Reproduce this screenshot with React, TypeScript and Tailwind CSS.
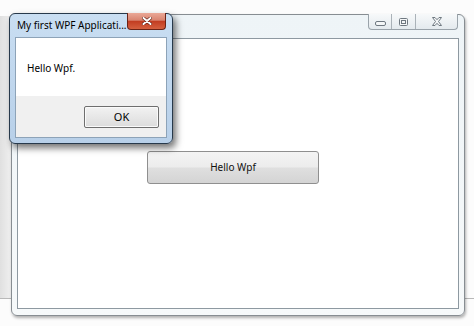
import React from "react"

const CaptionButtons = () => {
  return (
    <div className="-mt-px mr-px flex h-[16px] overflow-hidden rounded-b-[4px] border border-t-0 border-[#9aa3aa] bg-gradient-to-b from-[#f7f9fa] to-[#e4eaee]">
      <div className="flex w-[23px] items-center justify-center border-r border-[#aab2b8] pt-[3px]">
        <svg width="11" height="5" viewBox="0 0 11 5">
          <rect x="0.5" y="0.5" width="10" height="4" rx="1.5" fill="#f4f6f7" stroke="#6f7880" />
        </svg>
      </div>
      <div className="flex w-[24px] items-center justify-center border-r border-[#aab2b8]">
        <svg width="9" height="8" viewBox="0 0 9 8">
          <rect x="0.5" y="0.5" width="8" height="7" rx="1" fill="#f4f6f7" stroke="#6f7880" />
          <rect x="2.5" y="2.5" width="4" height="3" fill="none" stroke="#6f7880" />
        </svg>
      </div>
      <div className="flex w-[41px] items-center justify-center">
        <svg width="10" height="9" viewBox="0 0 10 9">
          <path
            d="M0.5 0.5 H3 L5 2.7 L7 0.5 H9.5 L6.5 4.5 L9.5 8.5 H7 L5 6.3 L3 8.5 H0.5 L3.5 4.5 Z"
            fill="#f4f6f7"
            stroke="#6f7880"
            strokeLinejoin="round"
          />
        </svg>
      </div>
    </div>
  )
}

const MainWindow = () => {
  return (
    <div className="absolute left-[11px] top-[14px] flex h-[302px] w-[454px] flex-col rounded-[6px] border border-[#878d92] bg-gradient-to-b from-[#eef4f7] to-[#f6f9fa] px-[5px] pb-[6px] shadow-[1px_2px_3px_rgba(0,0,0,0.3)]">
      <div className="flex h-[23px] items-start justify-end">
        <CaptionButtons />
      </div>
      <div className="flex-1 border border-[#8e99a1] bg-white pl-[129px] pt-[112px]">
        <button className="flex h-[33px] w-[172px] items-center justify-center rounded-[3px] border border-[#8f8f8f] bg-[linear-gradient(to_bottom,#f4f4f4_0%,#ececec_48%,#dfdfdf_52%,#d4d4d4_100%)] text-[10px] text-[#111]">
          Hello Wpf
        </button>
      </div>
    </div>
  )
}

const MessageDialog = () => {
  return (
    <div className="absolute left-[9px] top-[13px] flex h-[131px] w-[164px] flex-col rounded-[6px] border border-[#27394b] bg-gradient-to-b from-[#c9def2] to-[#b8d0e9] px-[5px] pb-[5px] shadow-[3px_4px_7px_rgba(0,0,0,0.55)]">
      <div className="flex h-[23px] items-start justify-between">
        <span className="min-w-0 overflow-hidden whitespace-nowrap pl-[2px] pt-[4px] text-[10px] leading-[14px] text-black">
          My first WPF Applicati...
        </span>
        <div className="-mt-px mr-px flex h-[17px] w-[39px] shrink-0 items-center justify-center rounded-b-[4px] border border-t-0 border-[#6a2316] bg-[linear-gradient(to_bottom,#eaa897_0%,#d88470_45%,#c23d22_52%,#d5603f_100%)]">
          <svg width="10" height="8" viewBox="0 0 10 8">
            <path d="M1.5 1 L8.5 7 M8.5 1 L1.5 7" stroke="#5a1a10" strokeWidth="3.2" strokeLinecap="round" />
            <path d="M1.5 1 L8.5 7 M8.5 1 L1.5 7" stroke="#ffffff" strokeWidth="2" strokeLinecap="round" />
          </svg>
        </div>
      </div>
      <div className="flex flex-1 flex-col border border-[#8da3b8]">
        <div className="h-[58px] bg-white pl-[11px] pt-[23px] text-[10px] leading-[14px] text-black">
          Hello Wpf.
        </div>
        <div className="flex flex-1 items-start justify-end bg-[#f0f0f0] pr-[7px] pt-[10px]">
          <button className="flex h-[22px] w-[75px] items-center justify-center rounded-[2px] border border-[#6e6e6e] bg-gradient-to-b from-[#f2f2f2] to-[#dcdcdc] text-[11px] text-black shadow-[inset_0_0_0_1px_#fafafa]">
            OK
          </button>
        </div>
      </div>
    </div>
  )
}

const App = () => {
  return (
    <div className="relative h-[326px] w-[474px] overflow-hidden bg-[#fcfcfc] font-['Noto_Sans',sans-serif]">
      <div className="absolute left-0 top-[16px] h-[283px] w-[12px] border-b border-[#b8b8b8] bg-gradient-to-r from-[#e0e0e0] to-[#f1f1f1]" />
      <div className="absolute right-0 top-[298px] w-[12px] border-t border-[#b8b8b8]" />
      <MainWindow />
      <MessageDialog />
    </div>
  )
}

export default App
